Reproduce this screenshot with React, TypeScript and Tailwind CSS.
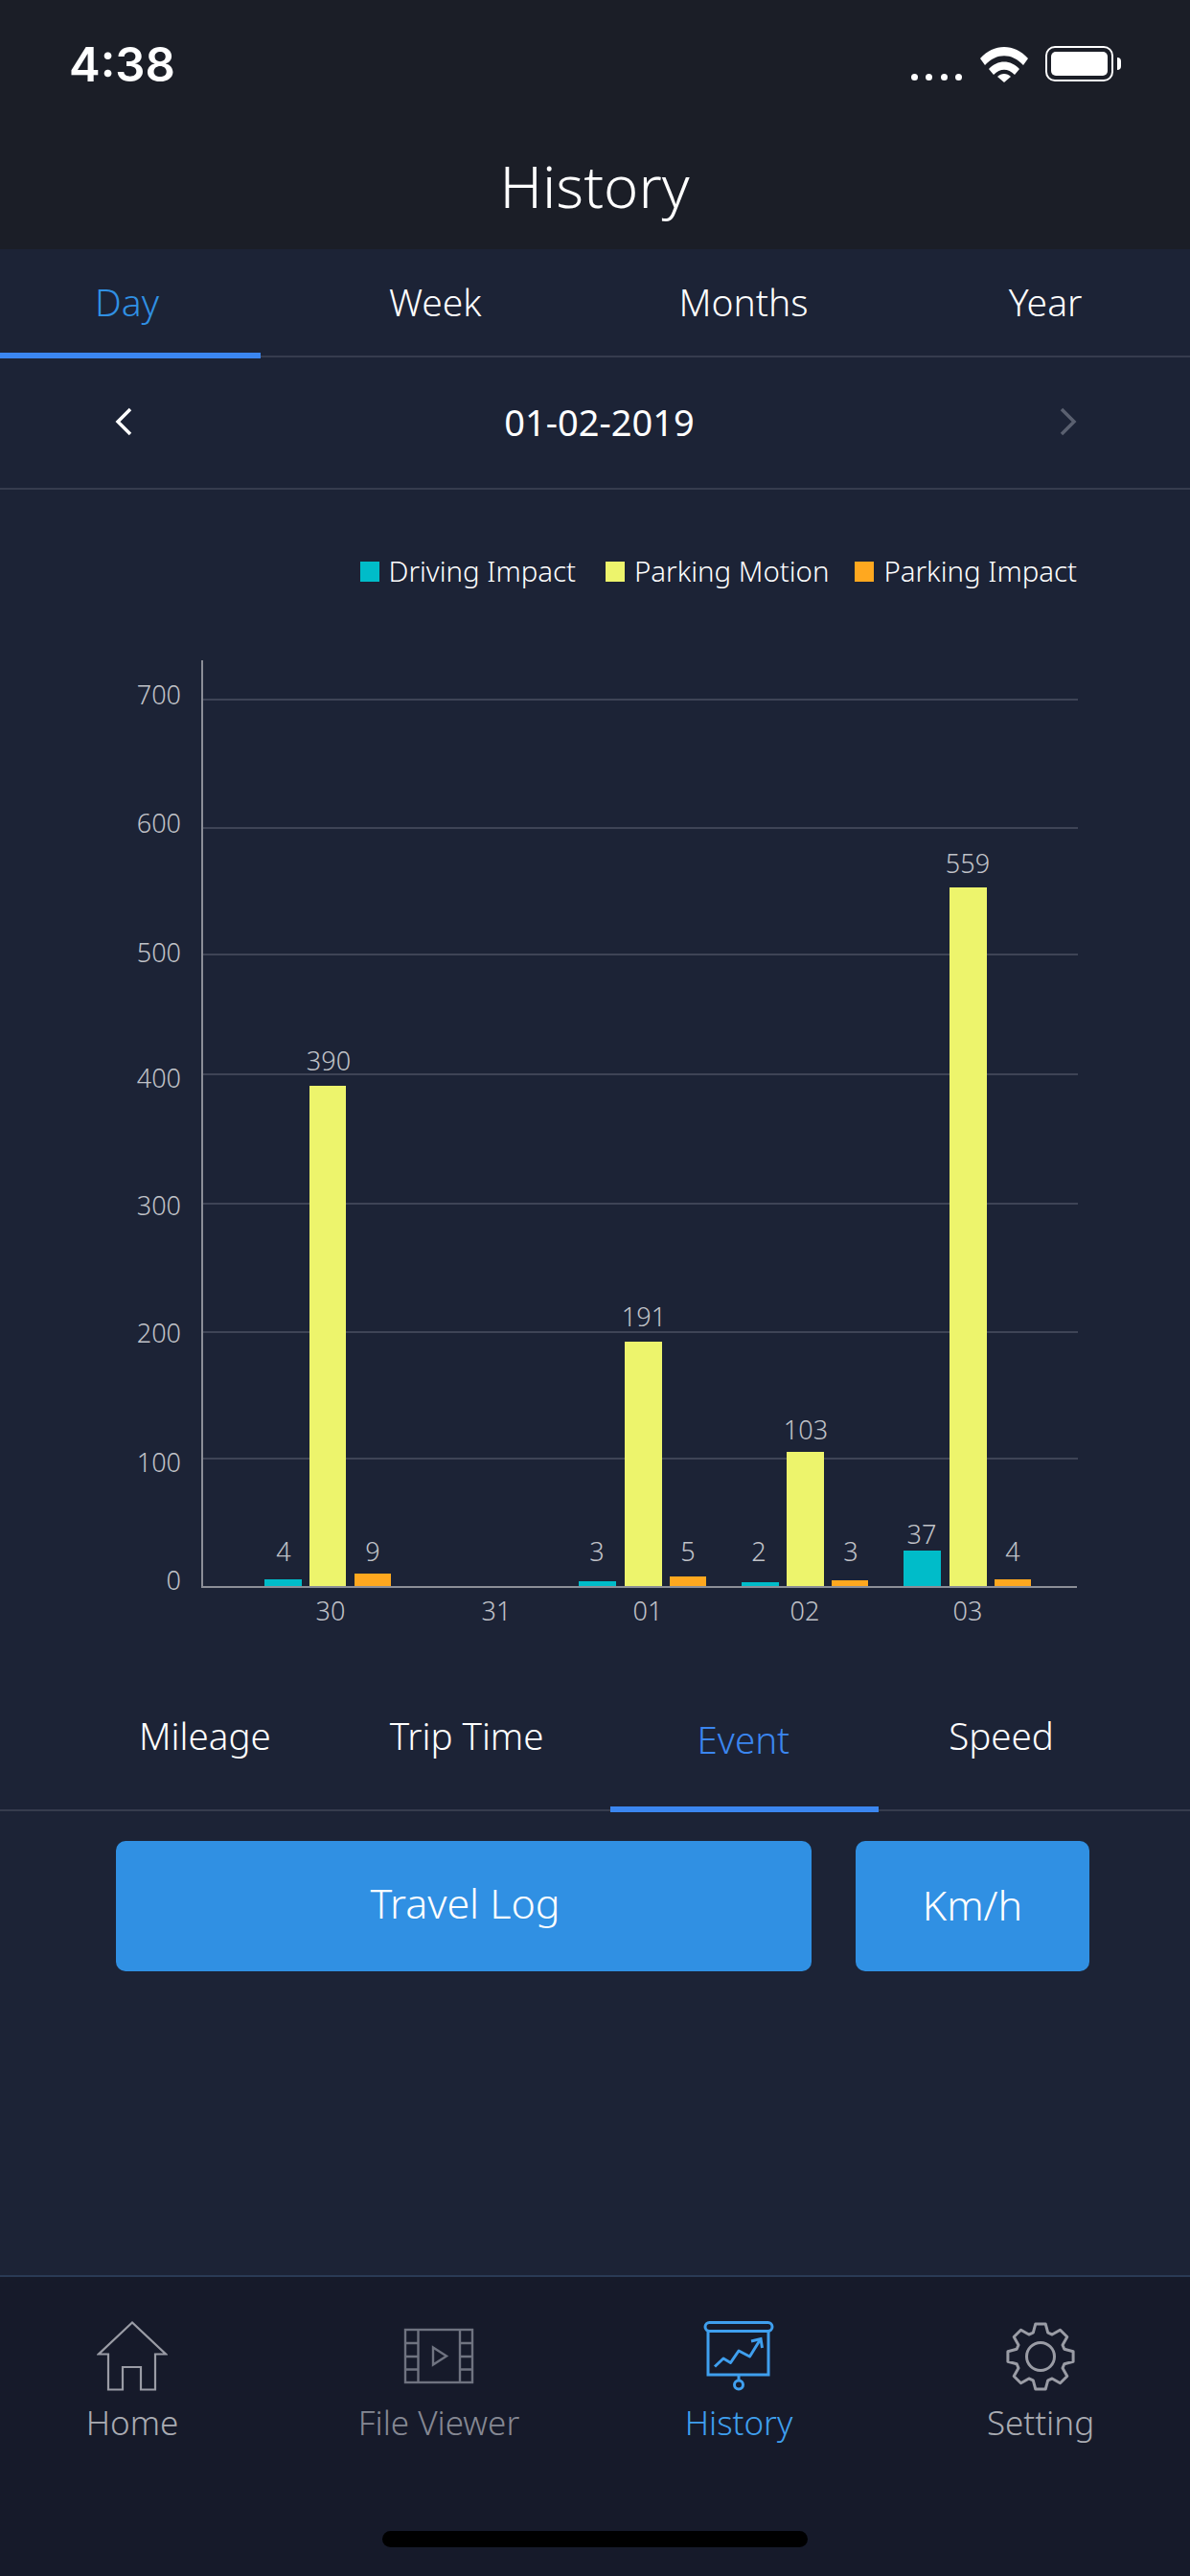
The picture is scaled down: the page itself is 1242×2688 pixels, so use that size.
const bars = [
  { x: 276, w: 39, top: 1648, fill: "#00bcc9", label: "4", lx: 296, ly: 1618 },
  { x: 323, w: 38, top: 1133, fill: "#edf46c", label: "390", lx: 343, ly: 1106 },
  { x: 370, w: 38, top: 1642, fill: "#ffa81f", label: "9", lx: 389, ly: 1618 },
  { x: 604, w: 39, top: 1650, fill: "#00bcc9", label: "3", lx: 623, ly: 1618 },
  { x: 652, w: 39, top: 1400, fill: "#edf46c", label: "191", lx: 672, ly: 1373 },
  { x: 699, w: 38, top: 1645, fill: "#ffa81f", label: "5", lx: 718, ly: 1618 },
  { x: 774, w: 39, top: 1651, fill: "#00bcc9", label: "2", lx: 792, ly: 1618 },
  { x: 821, w: 39, top: 1515, fill: "#edf46c", label: "103", lx: 841, ly: 1491 },
  { x: 868, w: 38, top: 1649, fill: "#ffa81f", label: "3", lx: 888, ly: 1618 },
  { x: 943, w: 39, top: 1618, fill: "#00bcc9", label: "37", lx: 962, ly: 1600 },
  { x: 991, w: 39, top: 926, fill: "#edf46c", label: "559", lx: 1010, ly: 900 },
  { x: 1038, w: 38, top: 1648, fill: "#ffa81f", label: "4", lx: 1057, ly: 1618 },
];

const yTicks = [
  { label: "700", line: 730, text: 724 },
  { label: "600", line: 864, text: 858 },
  { label: "500", line: 996, text: 993 },
  { label: "400", line: 1121, text: 1124 },
  { label: "300", line: 1256, text: 1257 },
  { label: "200", line: 1390, text: 1390 },
  { label: "100", line: 1522, text: 1525 },
];

const xTicks = [
  { label: "30", x: 345 },
  { label: "31", x: 518 },
  { label: "01", x: 676 },
  { label: "02", x: 840 },
  { label: "03", x: 1010 },
];

// svg starts at y=680 so subtract that from the picture coordinates
const CHART_TOP = 680;

function Chart() {
  return (
    <svg width="1242" height="1030" className="block">
      {yTicks.map((t) => (
        <g key={t.label}>
          <line x1="210" x2="1125" y1={t.line - CHART_TOP} y2={t.line - CHART_TOP} stroke="#3e4456" strokeWidth="2" />
          <text x="189" y={t.text - CHART_TOP} textAnchor="end" dominantBaseline="central" className="fill-[#c0c2c8] text-[27px] font-light">
            {t.label}
          </text>
        </g>
      ))}
      <text x="189" y={1648 - CHART_TOP} textAnchor="end" dominantBaseline="central" className="fill-[#c0c2c8] text-[27px] font-light">
        0
      </text>
      {bars.map((b) => (
        <g key={b.x}>
          <rect x={b.x} y={b.top - CHART_TOP} width={b.w} height={1656 - b.top} fill={b.fill} />
          <text x={b.lx} y={b.ly - CHART_TOP} textAnchor="middle" dominantBaseline="central" className="fill-[#c0c2c8] text-[27px] font-light">
            {b.label}
          </text>
        </g>
      ))}
      <line x1="211" x2="211" y1={689 - CHART_TOP} y2={1656 - CHART_TOP} stroke="#8b8e97" strokeWidth="2" />
      <line x1="210" x2="1124" y1={1656 - CHART_TOP} y2={1656 - CHART_TOP} stroke="#8b8e97" strokeWidth="2" />
      {xTicks.map((t) => (
        <text key={t.label} x={t.x} y={1680 - CHART_TOP} textAnchor="middle" dominantBaseline="central" className="fill-[#c0c2c8] text-[27px] font-light">
          {t.label}
        </text>
      ))}
    </svg>
  );
}

function LegendItem({ color, label, className }: { color: string; label: string; className: string }) {
  return (
    <div className={`flex items-center ${className}`}>
      <span className={`w-[20px] h-[21px] ${color}`} />
      <span className="ml-[10px] text-[29.4px] leading-[40px] font-light text-white">{label}</span>
    </div>
  );
}

function gearPath(cx: number, cy: number) {
  const teeth = 8;
  const outer = 34.5;
  const root = 26;
  const pts: string[] = [];
  for (let i = 0; i < teeth; i++) {
    const a = (i * Math.PI * 2) / teeth - Math.PI / 2;
    const off = [
      [-0.3, root],
      [-0.15, outer],
      [0.15, outer],
      [0.3, root],
    ];
    off.forEach(([d, r]) => {
      pts.push(`${(cx + Math.cos(a + d) * r).toFixed(1)} ${(cy + Math.sin(a + d) * r).toFixed(1)}`);
    });
  }
  return `M${pts.join("L")}Z`;
}

function HomeIcon() {
  return (
    <svg width="74" height="74" viewBox="0 0 74 74" fill="none" stroke="#9a9ca5" strokeWidth="2.2">
      <path d="M37 1.5 L2 34.5 H12 V71.5 H27 V48 H46 V71.5 H61 V34.5 H72 Z" />
    </svg>
  );
}

function FileIcon() {
  return (
    <svg width="74" height="74" viewBox="0 0 74 74" fill="none" stroke="#6f7380" strokeWidth="2.4">
      <rect x="2" y="9" width="70" height="55" />
      <path d="M15.5 9V64M59 9V64M2 23H15.5M2 37H15.5M2 50.5H15.5M59 23H72M59 37H72M59 50.5H72" />
      <path d="M31 27.5L45 36.5L31 45.5Z" />
    </svg>
  );
}

function HistoryIcon() {
  return (
    <svg width="74" height="74" viewBox="0 0 74 74" fill="none" stroke="#3f9fee" strokeWidth="3">
      <rect x="2" y="1.5" width="70" height="9" rx="4.5" />
      <path d="M5 10.5V56H68V10.5" />
      <path d="M37 56V62" />
      <circle cx="37" cy="66.5" r="4.5" />
      <path d="M12 47.5L21 39L28.5 43.5L37 31L48.5 37L59 20" strokeLinejoin="round" />
      <path d="M50 21L60 18.5L61.5 28" />
    </svg>
  );
}

function GearIcon() {
  return (
    <svg width="74" height="74" viewBox="0 0 74 74" fill="none" stroke="#9a9ca5" strokeWidth="3">
      <path d={gearPath(37, 37)} strokeLinejoin="round" />
      <circle cx="37" cy="37" r="14.5" />
    </svg>
  );
}

function NavItem({ label, icon, className }: { label: string; icon: React.ReactNode; className: string }) {
  return (
    <div className={`w-[160px] flex flex-col items-center ${className}`}>
      {icon}
      <span className="mt-[10px] text-[35px] leading-[44px] font-light whitespace-nowrap">{label}</span>
    </div>
  );
}

export default function App() {
  return (
    <div className="w-[1242px] h-[2688px] flex flex-col overflow-hidden bg-[#1c2336] text-white font-['Noto_Sans','Noto_Sans_CJK_KR',sans-serif]">
      <header className="h-[260px] shrink-0 bg-[#1b1e27]">
        <div className="h-[160px] flex items-start">
          <span className="ml-[72px] mt-[38px] text-[49px] leading-[60px] font-semibold font-['Inter',sans-serif]">4:38</span>
          <div className="ml-auto mr-[72px] mt-[48px] flex items-start">
            <div className="flex gap-[8.5px] mt-[29px]">
              <span className="w-[7px] h-[7px] rounded-full bg-white" />
              <span className="w-[7px] h-[7px] rounded-full bg-white" />
              <span className="w-[7px] h-[7px] rounded-full bg-white" />
              <span className="w-[7px] h-[7px] rounded-full bg-white" />
            </div>
            <svg width="50" height="38" viewBox="0 0 50 38" className="ml-[19px]" fill="#fff">
              <path d="M0 13 C14 -3 36 -3 50 13 L45 20 C33 7 17 7 5 20 Z" />
              <path d="M9 24 C18 14 32 14 41 24 L36 30 C29 23 21 23 14 30 Z" />
              <path d="M18 32 C22 28 28 28 32 32 L25 38 Z" />
            </svg>
            <div className="ml-[18px] w-[71px] h-[37px] rounded-[10px] border-2 border-white p-[4px]">
              <div className="w-full h-full rounded-[5px] bg-white" />
            </div>
            <div className="ml-[4px] mt-[12px] w-[4px] h-[13px] rounded-r-full bg-white" />
          </div>
        </div>
        <h1 className="text-center text-[61.5px] leading-[66px] font-light pr-[1px]">History</h1>
      </header>

      <nav className="h-[113px] shrink-0 relative flex items-center text-[39px] font-light border-b-2 border-[#363c4e]">
        <span className="ml-[99px] text-[#3090e3]">Day</span>
        <span className="ml-[240px]">Week</span>
        <span className="ml-[206px]">Months</span>
        <span className="ml-[209px]">Year</span>
        <div className="absolute left-0 bottom-[-3px] w-[272px] h-[6px] bg-[#3b86f0]" />
      </nav>

      <div className="h-[138px] shrink-0 flex items-center justify-between pl-[119px] pr-[117px] pb-[2px] border-b-2 border-[#363c4e]">
        <svg width="20" height="30" viewBox="0 0 20 30" fill="none" stroke="#fff" strokeWidth="3.5">
          <path d="M17 2L4 15L17 28" />
        </svg>
        <span className="ml-[7px] text-[38px] font-normal">01-02-2019</span>
        <svg width="20" height="30" viewBox="0 0 20 30" fill="none" stroke="#5a6070" strokeWidth="3.5">
          <path d="M3 2L16 15L3 28" />
        </svg>
      </div>

      <div className="h-[169px] shrink-0 flex justify-end items-start pt-[65px] pr-[118px]">
        <LegendItem color="bg-[#00bcc9]" label="Driving Impact" className="" />
        <LegendItem color="bg-[#edf46c]" label="Parking Motion" className="ml-[31px]" />
        <LegendItem color="bg-[#ffa81f]" label="Parking Impact" className="ml-[27px]" />
      </div>

      <div className="h-[1030px] shrink-0">
        <Chart />
      </div>

      <nav className="h-[180px] shrink-0 relative flex items-start pt-[76px] text-[38.5px] leading-[50px] font-light border-b-2 border-[#363c4e]">
        <span className="ml-[145px]">Mileage</span>
        <span className="ml-[124px]">Trip Time</span>
        <span className="ml-[160px] mt-[4px] text-[#3b86f0]">Event</span>
        <span className="ml-[166px]">Speed</span>
        <div className="absolute left-[637px] bottom-[-3px] w-[280px] h-[6px] bg-[#3b86f0]" />
      </nav>

      <div className="flex pl-[121px] mt-[31px] text-[43px] font-light">
        <button className="w-[726px] h-[136px] rounded-[10px] bg-[#3090e3] pl-[3px] pb-[6px]">Travel Log</button>
        <button className="ml-[46px] w-[244px] h-[136px] rounded-[10px] bg-[#3090e3] pb-[2px]">Km/h</button>
      </div>

      <div className="flex-1" />

      <footer className="h-[314px] shrink-0 bg-[#161a2a] border-t-2 border-[#2a3a55] flex flex-col">
        <div className="flex pt-[46px]">
          <NavItem label="Home" icon={<HomeIcon />} className="ml-[58px] text-[#a9abb2]" />
          <NavItem label="File Viewer" icon={<FileIcon />} className="ml-[160px] text-[#858893]" />
          <NavItem label="History" icon={<HistoryIcon />} className="ml-[153px] text-[#3f9fee]" />
          <NavItem label="Setting" icon={<GearIcon />} className="ml-[155px] text-[#a9abb2]" />
        </div>
        <div className="mt-auto mb-[30px] mx-auto w-[444px] h-[17px] rounded-full bg-black" />
      </footer>
    </div>
  );
}
